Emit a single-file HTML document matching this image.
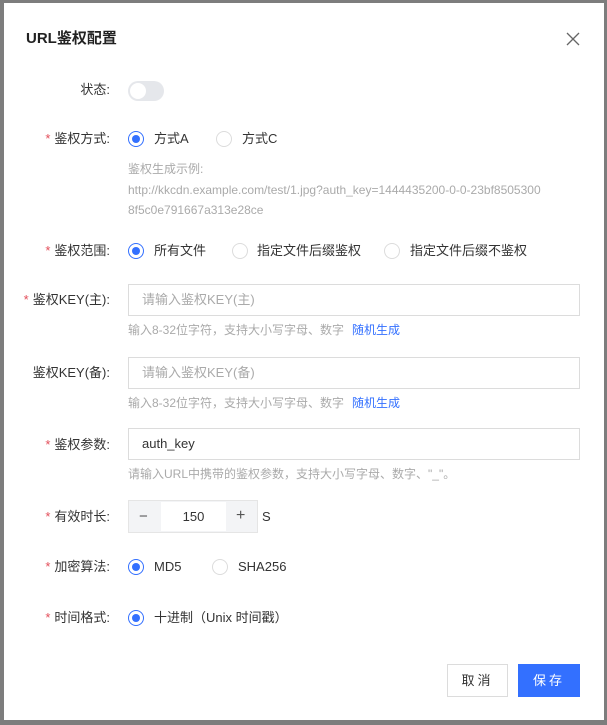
<!DOCTYPE html><html><head><meta charset="utf-8"><style>
*{box-sizing:border-box;margin:0;padding:0}
body{width:607px;height:725px;background:#7d7d7d;font-family:"Liberation Sans","Noto Sans CJK SC",sans-serif;font-size:13px;color:#333;position:relative;overflow:hidden}
.dlg{position:absolute;left:4px;top:3px;width:600px;height:717px;background:#fff}
.a{position:absolute;white-space:nowrap;line-height:16px}
.lbl{position:absolute;right:497px;white-space:nowrap;color:#333;line-height:16px}
.lbl b{color:#e34d59;font-weight:normal;margin-right:4px}
.r{position:absolute;width:16px;height:16px;border-radius:50%;border:1px solid #dcdcdc;background:#fff}
.r.on{border-color:#3370ff}
.r.on:after{content:"";position:absolute;left:3px;top:3px;width:8px;height:8px;border-radius:50%;background:#3370ff}
.in{position:absolute;left:128px;width:452px;height:32px;border:1px solid #dcdcdc;padding-left:13px;line-height:30px}
.ph{color:#aaa}
.hint{position:absolute;left:128px;color:#aaa;font-size:12px;white-space:nowrap;line-height:16px}
.hint a{color:#3370ff;margin-left:8px}
</style></head><body>
<div class="dlg"></div>
<div class="a" style="left:26px;top:31px;font-size:15px;font-weight:bold;color:#222">URL鉴权配置</div>
<svg class="a" style="left:566px;top:32px" width="14" height="14"><path d="M1 1L13 13M13 1L1 13" stroke="#666" stroke-width="1.3"/></svg>

<div class="lbl" style="top:82px">状态:</div>
<div class="a" style="left:128px;top:81px;width:36px;height:20px;border-radius:10px;background:#e5e7eb"><div style="position:absolute;left:2px;top:2px;width:16px;height:16px;border-radius:50%;background:#fff"></div></div>

<div class="lbl" style="top:131px"><b>*</b>鉴权方式:</div>
<div class="r on" style="left:128px;top:131px"></div><div class="a" style="left:154px;top:131px">方式A</div>
<div class="r" style="left:216px;top:131px"></div><div class="a" style="left:242px;top:131px">方式C</div>
<div class="hint" style="top:161px">鉴权生成示例:</div>
<div class="hint" style="top:182px">http://kkcdn.example.com/test/1.jpg?auth_key=1444435200-0-0-23bf8505300</div>
<div class="hint" style="top:202px">8f5c0e791667a313e28ce</div>

<div class="lbl" style="top:243px"><b>*</b>鉴权范围:</div>
<div class="r on" style="left:128px;top:243px"></div><div class="a" style="left:154px;top:243px">所有文件</div>
<div class="r" style="left:232px;top:243px"></div><div class="a" style="left:257px;top:243px">指定文件后缀鉴权</div>
<div class="r" style="left:384px;top:243px"></div><div class="a" style="left:410px;top:243px">指定文件后缀不鉴权</div>

<div class="lbl" style="top:292px"><b>*</b>鉴权KEY(主):</div>
<div class="in ph" style="top:284px">请输入鉴权KEY(主)</div>
<div class="hint" style="top:322px">输入8-32位字符，支持大小写字母、数字<a>随机生成</a></div>

<div class="lbl" style="top:365px">鉴权KEY(备):</div>
<div class="in ph" style="top:357px">请输入鉴权KEY(备)</div>
<div class="hint" style="top:395px">输入8-32位字符，支持大小写字母、数字<a>随机生成</a></div>

<div class="lbl" style="top:437px"><b>*</b>鉴权参数:</div>
<div class="in" style="top:428px">auth_key</div>
<div class="hint" style="top:466px">请输入URL中携带的鉴权参数，支持大小写字母、数字、"_"。</div>

<div class="lbl" style="top:509px"><b>*</b>有效时长:</div>
<div class="a" style="left:128px;top:500px;width:130px;height:33px;border:1px solid #e5e5e5;background:#f3f4f6"></div>
<div class="a" style="left:161px;top:502px;width:65px;height:29px;background:#fff;text-align:center;line-height:29px">150</div>
<div class="a" style="left:139px;top:509px;font-size:15px;color:#555">−</div>
<div class="a" style="left:236px;top:508px;font-size:16px;color:#555">+</div>
<div class="a" style="left:262px;top:509px">S</div>

<div class="lbl" style="top:559px"><b>*</b>加密算法:</div>
<div class="r on" style="left:128px;top:559px"></div><div class="a" style="left:154px;top:559px">MD5</div>
<div class="r" style="left:212px;top:559px"></div><div class="a" style="left:238px;top:559px">SHA256</div>

<div class="lbl" style="top:610px"><b>*</b>时间格式:</div>
<div class="r on" style="left:128px;top:610px"></div><div class="a" style="left:154px;top:610px">十进制（Unix 时间戳）</div>

<div class="a" style="left:447px;top:664px;width:61px;height:33px;border:1px solid #dcdcdc;text-align:center;line-height:31px;letter-spacing:3px">取消</div>
<div class="a" style="left:518px;top:664px;width:62px;height:33px;background:#3370ff;color:#fff;text-align:center;line-height:33px;letter-spacing:3px">保存</div>
</body></html>
